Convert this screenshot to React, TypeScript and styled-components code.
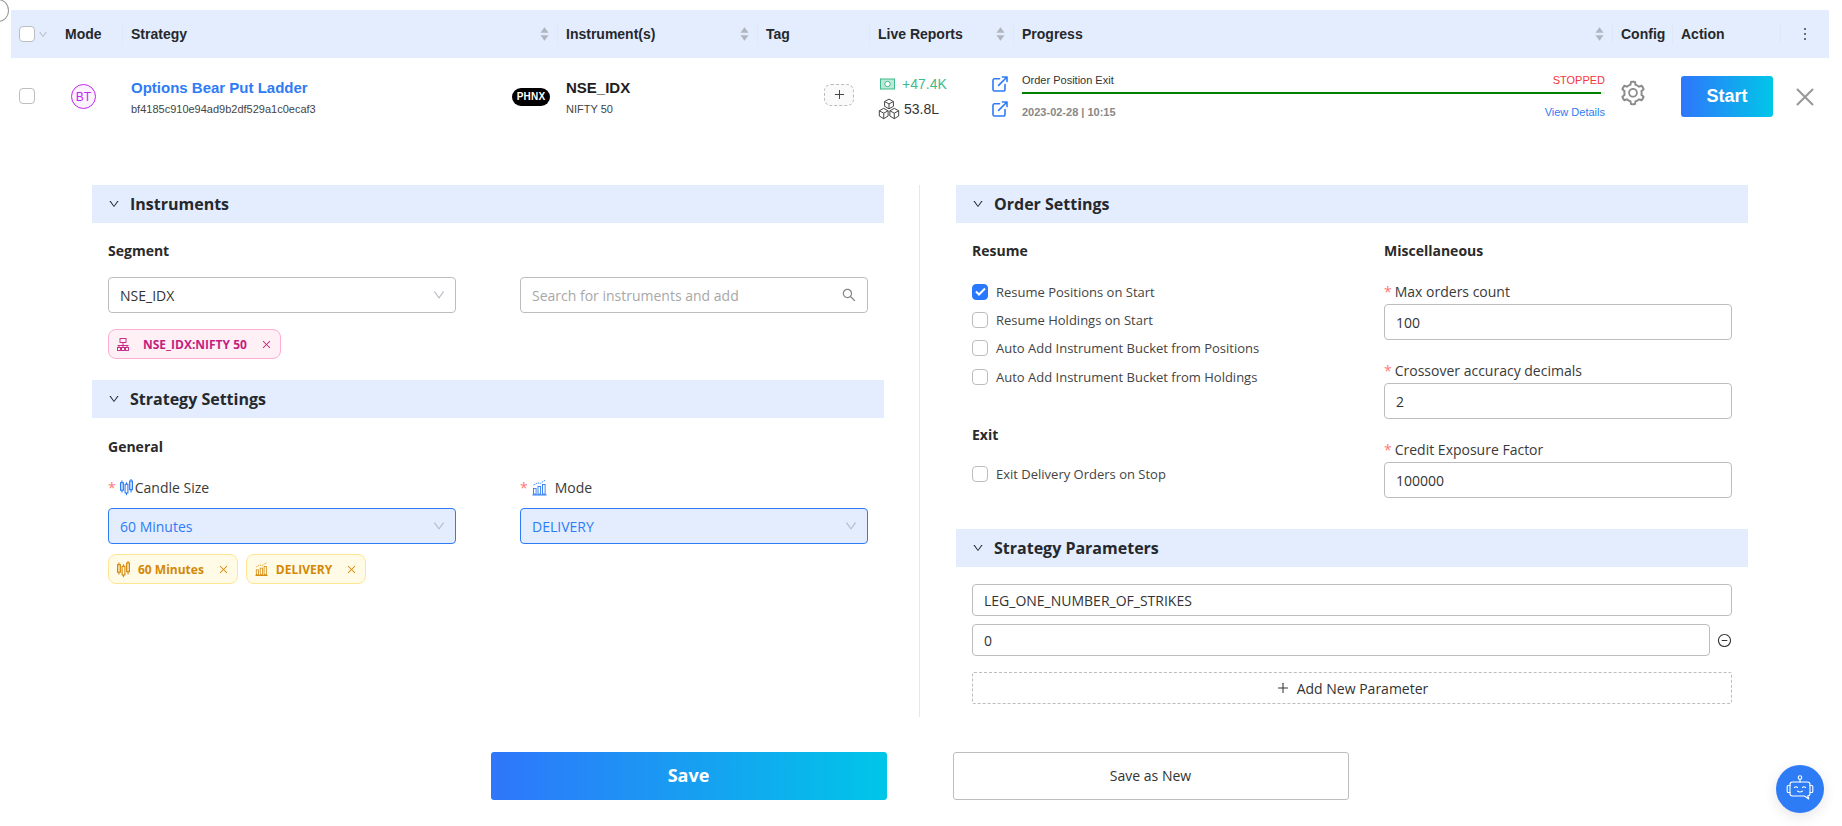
import React from "react";
import styled, { createGlobalStyle } from "styled-components";
import {
  AiOutlineClose,
  AiOutlineDown,
  AiOutlineMinusCircle,
  AiOutlinePlus,
  AiOutlineSearch,
  AiOutlineSetting,
} from "react-icons/ai";

const Global = createGlobalStyle`
  html, body { margin: 0; padding: 0; background: #fff; overflow: hidden; }
  * { box-sizing: border-box; }
  body { font-family: "Open Sans", "Noto Sans", sans-serif; color: #333; }
`;

const COLS = "46px 66px 435px 200px 112px 144px 599px 60px 108px 48px";
const BAR = "#e3edfe";

const Page = styled.div`
  position: relative;
  width: 1842px;
  height: 826px;
  padding: 10px 13px 0 11px;
  overflow: hidden;
`;
const CornerRing = styled.div`
  position: absolute;
  left: -13px;
  top: -1px;
  width: 22px;
  height: 23px;
  border-radius: 50%;
  border: 1px solid #999;
  background: #fff;
`;
const TableHead = styled.div`
  display: grid;
  grid-template-columns: ${COLS};
  height: 48px;
  background: ${BAR};
  font: 700 14px "Liberation Sans", Arial, sans-serif;
  color: #25282c;
`;
const HeadCell = styled.div<{ $sep?: boolean }>`
  position: relative;
  display: flex;
  align-items: center;
  justify-content: space-between;
  padding: 0 9px 0 8px;
  &::after {
    content: "";
    display: ${(p) => (p.$sep ? "block" : "none")};
    position: absolute;
    right: 0;
    top: 13px;
    height: 22px;
    width: 1px;
    background: #dfe8f8;
  }
`;
const SelectCell = styled(HeadCell)`
  justify-content: flex-start;
  gap: 3px;
  color: #a9adb5;
`;
const MoreCell = styled(HeadCell)`
  justify-content: center;
  padding-right: 9px;
`;
const Box = styled.span<{ $on?: boolean }>`
  flex: none;
  display: inline-flex;
  align-items: center;
  justify-content: center;
  width: 16px;
  height: 16px;
  border-radius: 4px;
  border: 1px solid ${(p) => (p.$on ? "#2979ff" : "#bdbdbd")};
  background: ${(p) => (p.$on ? "#2979ff" : "#fff")};
`;
const TableRow = styled.div`
  display: grid;
  grid-template-columns: ${COLS};
  height: 77px;
  align-items: center;
  font-family: "Liberation Sans", Arial, sans-serif;
`;
const Cell = styled.div`
  padding: 0 8px;
  min-width: 0;
`;
const CheckCell = styled(Cell)`
  padding-top: 2px;
`;
const ModeBadge = styled.span`
  display: flex;
  align-items: center;
  justify-content: center;
  width: 25px;
  height: 25px;
  margin-left: 6px;
  border-radius: 50%;
  border: 1px solid #c026f0;
  background: #fdf3ff;
  color: #c026f0;
  font-size: 12px;
`;
const StrategyCell = styled(Cell)`
  display: grid;
  grid-template-columns: 1fr auto;
  align-items: center;
  padding-right: 8px;
`;
const StrategyName = styled.div`
  font: 700 15px/18px "Liberation Sans", Arial, sans-serif;
  color: #2e7bf6;
  margin: 1px 0 5px;
`;
const SubText = styled.div`
  font-size: 11px;
  line-height: 14px;
  color: #444;
`;
const Pill = styled.span`
  display: flex;
  align-items: center;
  justify-content: center;
  width: 38px;
  height: 18px;
  border-radius: 9px;
  background: #000;
  color: #fff;
  font: 700 10px "Liberation Sans", Arial, sans-serif;
  letter-spacing: 0.2px;
`;
const InstName = styled.div`
  font: 700 15px/18px "Liberation Sans", Arial, sans-serif;
  color: #1e1e1e;
  margin: 1px 0 5px;
`;
const TagCell = styled(Cell)`
  display: flex;
  justify-content: flex-end;
  padding-right: 16px;
`;
const TagAdd = styled.span`
  display: flex;
  align-items: center;
  justify-content: center;
  width: 30px;
  height: 22px;
  border: 1px dashed #bbb;
  border-radius: 7px;
  background: #fafafa;
  color: #444;
  font-size: 13px;
  margin-top: -4px;
`;
const LiveGrid = styled.div`
  display: grid;
  grid-template-columns: 1fr auto;
  row-gap: 5px;
  align-items: center;
  margin-right: -2px;
  margin-top: -1px;
`;
const LiveValue = styled.div<{ $green?: boolean }>`
  display: flex;
  align-items: center;
  gap: ${(p) => (p.$green ? "7px" : "4px")};
  height: 20px;
  font-size: 14px;
  color: ${(p) => (p.$green ? "#3dba8c" : "#333")};
  padding-left: ${(p) => (p.$green ? "2px" : "0")};
`;
const ProgressCell = styled(Cell)`
  margin-top: -1px;
`;
const ProgressTop = styled.div`
  display: flex;
  justify-content: space-between;
  font-size: 11px;
  line-height: 14px;
  color: #333;
`;
const Stopped = styled.span`
  color: #f5363c;
`;
const Track = styled.div`
  height: 2px;
  margin: 5px 0 11px;
  background: #eee;
  padding-right: 4px;
`;
const Fill = styled.div`
  height: 2px;
  background: #008000;
`;
const ProgressBottom = styled.div`
  display: flex;
  justify-content: space-between;
  font-size: 11px;
  line-height: 14px;
`;
const DateText = styled.span`
  font-weight: 700;
  color: #888;
`;
const ViewLink = styled.span`
  color: #2e7bf6;
`;
const Start = styled.button`
  width: 92px;
  height: 41px;
  border: 0;
  border-radius: 3px;
  background: linear-gradient(90deg, #2f76fb, #00c6e8);
  color: #fff;
  font: 700 18px "Liberation Sans", Arial, sans-serif;
`;
const ActionCell = styled.div`
  padding-left: 8px;
`;
const CloseCell = styled.div`
  display: flex;
  padding-left: 11px;
  color: #999;
`;
const ConfigCell = styled.div`
  display: flex;
  padding-left: 6px;
  color: #8c8c8c;
  margin-top: -8px;
`;
const Form = styled.div`
  display: grid;
  grid-template-columns: 792px 72px 792px;
  margin: 50px 0 0 81px;
  height: 532px;
`;
const Divider = styled.div`
  width: 1px;
  background: #e8e8e8;
  margin-left: 35px;
`;
const Column = styled.div`
  display: flex;
  flex-direction: column;
`;
const SectionBar = styled.div`
  display: flex;
  align-items: center;
  gap: 10px;
  height: 38px;
  flex: none;
  padding-left: 16px;
  background: ${BAR};
  color: #25282c;
  font-size: 16px;
  font-weight: 700;
`;
const SectionBody = styled.div<{ $after?: number; $top?: number }>`
  padding: ${(p) => p.$top ?? 18}px 16px 0;
  margin-bottom: ${(p) => p.$after ?? 0}px;
`;
const SubTitle = styled.div<{ $after?: number; $before?: number }>`
  font-size: 14px;
  line-height: 20px;
  font-weight: 700;
  color: #2a2a2a;
  margin-top: ${(p) => p.$before ?? 0}px;
  margin-bottom: ${(p) => p.$after ?? 0}px;
`;
const TwoUp = styled.div`
  display: grid;
  grid-template-columns: 348px 348px;
  column-gap: 64px;
`;
const SelectBox = styled.div<{ $active?: boolean; $muted?: boolean }>`
  display: flex;
  align-items: center;
  justify-content: space-between;
  height: 36px;
  padding: 0 11px;
  border-radius: 4px;
  border: 1px solid ${(p) => (p.$active ? "#2e7bf6" : "#bdbdbd")};
  background: ${(p) => (p.$active ? BAR : "#fff")};
  color: ${(p) => (p.$active ? "#2e7bf6" : p.$muted ? "#a8a8a8" : "#333")};
  font-size: 14px;
`;
const Caret = styled.span`
  display: flex;
  color: #b5bac3;
  margin-right: -2px;
`;
const SearchGlyph = styled(Caret)`
  color: #888;
  margin-right: -1px;
`;
const TagRow = styled.div<{ $top: number }>`
  display: flex;
  gap: 8px;
  margin-top: ${(p) => p.$top}px;
`;
const Chip = styled.span<{ $pink?: boolean }>`
  display: inline-flex;
  align-items: center;
  height: 30px;
  padding: 0 8px;
  border-radius: 8px;
  border: 1px solid ${(p) => (p.$pink ? "#ffadd2" : "#ffe58f")};
  background: ${(p) => (p.$pink ? "#fff0f6" : "#fffbe6")};
  color: ${(p) => (p.$pink ? "#c41d7f" : "#d48806")};
  font-size: 12px;
  font-weight: 700;
  gap: ${(p) => (p.$pink ? "14px" : "8px")};
`;
const ChipClose = styled.span<{ $tight?: boolean }>`
  display: flex;
  margin-left: ${(p) => (p.$tight ? 0 : 6)}px;
`;
const FieldLabel = styled.div<{ $raised?: boolean }>`
  display: flex;
  align-items: center;
  height: 20px;
  padding-bottom: ${(p) => (p.$raised ? 2 : 0)}px;
  font-size: 14px;
  color: #3a3a3a;
`;
const Star = styled.span`
  color: #ff7875;
  margin-right: 3px;
  font-size: 14px;
`;
const LabelIcon = styled.span<{ $gap?: number }>`
  display: flex;
  margin-left: 1px;
  margin-right: ${(p) => p.$gap ?? 2}px;
`;
const OrderGrid = styled.div`
  display: grid;
  grid-template-columns: 412px 348px;
  margin-bottom: 31px;
`;
const Check = styled.label`
  display: flex;
  align-items: center;
  gap: 8px;
  height: 28.4px;
  font-size: 13px;
  color: #444;
`;
const CheckList = styled.div<{ $top: number }>`
  margin-top: ${(p) => p.$top}px;
`;
const Fields = styled.div`
  display: flex;
  flex-direction: column;
  gap: 21px;
  margin-top: 21px;
`;
const Field = styled.div<{ $gap?: number }>`
  display: flex;
  flex-direction: column;
  gap: ${(p) => p.$gap ?? 2}px;
`;
const TextBox = styled.div`
  display: flex;
  align-items: center;
  height: 36px;
  padding: 0 11px;
  border-radius: 4px;
  border: 1px solid #bdbdbd;
  font-size: 14px;
  color: #333;
  background: #fff;
`;
const ParamBox = styled(TextBox)`
  height: 32px;
  flex: 1;
`;
const ParamList = styled.div`
  display: flex;
  flex-direction: column;
  gap: 8px;
  padding: 17px 16px 0;
`;
const ParamRow = styled.div`
  display: flex;
  align-items: center;
  gap: 7px;
  color: #333;
`;
const AddParam = styled.div`
  display: flex;
  align-items: center;
  justify-content: center;
  gap: 7px;
  height: 32px;
  margin-top: 8px;
  border: 1px dashed #bdbdbd;
  border-radius: 2px;
  font-size: 14px;
  color: #333;
`;
const Actions = styled.div`
  display: flex;
  justify-content: center;
  gap: 66px;
  padding-right: 1px;
  margin-top: 35px;
`;
const SaveButton = styled.button`
  width: 396px;
  height: 48px;
  padding: 0 0 2px;
  border: 0;
  border-radius: 3px;
  background: linear-gradient(90deg, #2f76fb, #00c6e8);
  color: #fff;
  font: 700 18px "Open Sans", sans-serif;
`;
const SaveNewButton = styled.button`
  width: 396px;
  height: 48px;
  padding: 0 0 2px;
  border: 1px solid #bdbdbd;
  border-radius: 3px;
  background: #fff;
  color: #333;
  font: 400 14px "Open Sans", sans-serif;
`;
const BotButton = styled.div`
  position: absolute;
  left: 1776px;
  top: 765px;
  width: 48px;
  height: 48px;
  border-radius: 50%;
  background: #2e7bf6;
  display: flex;
  align-items: center;
  justify-content: center;
  box-shadow: 0 4px 14px rgba(0, 0, 0, 0.1);
`;

const Sort = () => (
  <svg width="9" height="16" viewBox="0 0 10 16" fill="#b0b5bf">
    <path d="M5 0.5 9.5 6.5H.5z" />
    <path d="M.5 9.5h9L5 15.5z" />
  </svg>
);
const Dots = () => (
  <svg width="4" height="14" viewBox="0 0 4 14" fill="#444">
    <circle cx="2" cy="2" r="1" />
    <circle cx="2" cy="7" r="1" />
    <circle cx="2" cy="12" r="1" />
  </svg>
);
const Tick = () => (
  <svg width="11" height="9" viewBox="0 0 11 9" fill="none" stroke="#fff" strokeWidth="2">
    <path d="M1 4.5 4 7.5 10 1.5" />
  </svg>
);
const Money = () => (
  <svg width="15" height="12" viewBox="0 0 15 12" fill="none" stroke="#3dba8c">
    <rect x=".5" y="1" width="14" height="10" fill="#bfe9d7" />
    <ellipse cx="7.5" cy="6" rx="2.8" ry="2.6" fill="#fff" />
  </svg>
);
const Cubes = () => (
  <svg width="22" height="22" viewBox="0 0 20 20" fill="none" stroke="#444" strokeWidth="0.9" strokeLinejoin="round">
    <path d="M10 1 14 3.2V7.6L10 9.8 6 7.6V3.2z M6 3.2 10 5.4 14 3.2 M10 5.4V9.8" />
    <path d="M5.2 9.4 9.2 11.6V16.4L5.2 18.8 1.2 16.4V11.6z M1.2 11.6 5.2 13.8 9.2 11.6 M5.2 13.8V18.8" />
    <path d="M14.8 9.4 18.8 11.6V16.4L14.8 18.8 10.8 16.4V11.6z M10.8 11.6 14.8 13.8 18.8 11.6 M14.8 13.8V18.8" />
  </svg>
);
const Ext = () => (
  <svg width="16" height="16" viewBox="0 0 16 16" fill="none" stroke="#2e7bf6" strokeWidth="1.6" strokeLinecap="round" strokeLinejoin="round">
    <path d="M7.5 2.8H2.4A1.4 1.4 0 0 0 1 4.2v9.4A1.4 1.4 0 0 0 2.4 15h9.2a1.4 1.4 0 0 0 1.4-1.4V8.6" />
    <path d="M6.6 9.4 15 1M10.4 1H15V5.6" />
  </svg>
);
const Candles = ({ c, w = 13, h = 18 }: { c: string; w?: number; h?: number }) => (
  <svg width={w} height={h} viewBox="0 0 12 16" fill="none" stroke={c} strokeWidth="1">
    <rect x=".5" y="4" width="2.6" height="7" fill={c} fillOpacity=".25" />
    <path d="M1.8 2V4M1.8 11V13" />
    <rect x="4.7" y="5.5" width="2.6" height="8" />
    <path d="M6 3.5V5.5M6 13.5V15.5" />
    <rect x="8.9" y="2.5" width="2.6" height="8" fill={c} fillOpacity=".25" />
    <path d="M10.2 .5V2.5M10.2 10.5V13" />
  </svg>
);
const Bars = ({ c, w = 15, h = 17 }: { c: string; w?: number; h?: number }) => (
  <svg width={w} height={h} viewBox="0 0 15 16" fill="none" stroke={c} strokeWidth="0.9">
    <rect x="1.5" y="9" width="2.6" height="5.5" />
    <rect x="6" y="7" width="2.6" height="7.5" />
    <rect x="10.5" y="5" width="2.6" height="9.5" />
    <path d="M.5 15.4H14.5" strokeWidth="1.2" />
    <path d="M1.5 5.5 5.5 3.5 8.5 3.8 13 .8" strokeDasharray="1.5 .8" />
  </svg>
);
const SiteMap = () => (
  <svg width="12" height="13" viewBox="0 0 12 13" fill="none" stroke="#c41d7f" strokeWidth="0.9">
    <rect x="3" y=".5" width="6" height="4" />
    <path d="M.5 7.5H11.5M6 4.5V7.5M2 7.5V9.5M6 7.5V9.5M10 7.5V9.5" />
    <rect x=".5" y="9.5" width="3" height="3" />
    <rect x="4.5" y="9.5" width="3" height="3" />
    <rect x="8.5" y="9.5" width="3" height="3" />
  </svg>
);
const Bot = () => (
  <svg width="30" height="30" viewBox="0 0 30 30" fill="none" stroke="#fff" strokeWidth="1.1" strokeLinecap="round" strokeLinejoin="round">
    <circle cx="15" cy="3.6" r="1.8" />
    <path d="M15 5.4V8" />
    <path d="M7.5 8H22.5A2.5 2.5 0 0 1 25 10.5V19.5A2.5 2.5 0 0 1 22.5 22H22.8L23.8 25 19.5 22H7.5A2.5 2.5 0 0 1 5 19.5V10.5A2.5 2.5 0 0 1 7.5 8z" />
    <path d="M5 11.5H3.2A1 1 0 0 0 2.2 12.5V17.5A1 1 0 0 0 3.2 18.5H5M25 11.5H26.8A1 1 0 0 1 27.8 12.5V17.5A1 1 0 0 1 26.8 18.5H25" />
    <path d="M9.5 13.5Q11 12 12.5 13.5M17.5 13.5Q19 12 20.5 13.5M12.5 17Q15 19 17.5 17" />
  </svg>
);

const Chevron = () => <AiOutlineDown size={12} />;

const checksTop = ["Resume Positions on Start", "Resume Holdings on Start", "Auto Add Instrument Bucket from Positions", "Auto Add Instrument Bucket from Holdings"];

export default function App() {
  return (
    <Page>
      <Global />
      <CornerRing />
      <TableHead>
        <SelectCell>
          <Box />
          <AiOutlineDown size={15} />
        </SelectCell>
        <HeadCell $sep>Mode</HeadCell>
        <HeadCell $sep>Strategy<Sort /></HeadCell>
        <HeadCell $sep>Instrument(s)<Sort /></HeadCell>
        <HeadCell $sep>Tag</HeadCell>
        <HeadCell $sep>Live Reports<Sort /></HeadCell>
        <HeadCell $sep>Progress<Sort /></HeadCell>
        <HeadCell $sep>Config</HeadCell>
        <HeadCell $sep>Action</HeadCell>
        <MoreCell><Dots /></MoreCell>
      </TableHead>
      <TableRow>
        <CheckCell><Box /></CheckCell>
        <Cell><ModeBadge>BT</ModeBadge></Cell>
        <StrategyCell>
          <div>
            <StrategyName>Options Bear Put Ladder</StrategyName>
            <SubText>bf4185c910e94ad9b2df529a1c0ecaf3</SubText>
          </div>
          <Pill>PHNX</Pill>
        </StrategyCell>
        <Cell>
          <InstName>NSE_IDX</InstName>
          <SubText>NIFTY 50</SubText>
        </Cell>
        <TagCell><TagAdd><AiOutlinePlus /></TagAdd></TagCell>
        <Cell>
          <LiveGrid>
            <LiveValue $green><Money />+47.4K</LiveValue>
            <Ext />
            <LiveValue><Cubes />53.8L</LiveValue>
            <Ext />
          </LiveGrid>
        </Cell>
        <ProgressCell>
          <ProgressTop>Order Position Exit<Stopped>STOPPED</Stopped></ProgressTop>
          <Track><Fill /></Track>
          <ProgressBottom>
            <DateText>2023-02-28 | 10:15</DateText>
            <ViewLink>View Details</ViewLink>
          </ProgressBottom>
        </ProgressCell>
        <ConfigCell><AiOutlineSetting size={28} /></ConfigCell>
        <ActionCell><Start>Start</Start></ActionCell>
        <CloseCell><AiOutlineClose size={26} /></CloseCell>
      </TableRow>

      <Form>
        <Column>
          <SectionBar><Chevron />Instruments</SectionBar>
          <SectionBody $after={21}>
            <SubTitle $after={16}>Segment</SubTitle>
            <TwoUp>
              <SelectBox>NSE_IDX<Caret><AiOutlineDown size={14} /></Caret></SelectBox>
              <SelectBox $muted>Search for instruments and add<SearchGlyph><AiOutlineSearch size={16} /></SearchGlyph></SelectBox>
            </TwoUp>
            <TagRow $top={16}>
              <Chip $pink>
                <SiteMap />NSE_IDX:NIFTY 50
                <ChipClose $tight><AiOutlineClose size={11} /></ChipClose>
              </Chip>
            </TagRow>
          </SectionBody>
          <SectionBar><Chevron />Strategy Settings</SectionBar>
          <SectionBody $top={19}>
            <SubTitle $after={20}>General</SubTitle>
            <TwoUp>
              <Field $gap={11}>
                <FieldLabel>
                  <Star>*</Star>
                  <LabelIcon><Candles c="#2e7bf6" /></LabelIcon>Candle Size
                </FieldLabel>
                <SelectBox $active>60 Minutes<Caret><AiOutlineDown size={14} /></Caret></SelectBox>
              </Field>
              <Field $gap={11}>
                <FieldLabel>
                  <Star>*</Star>
                  <LabelIcon $gap={8}><Bars c="#2e7bf6" /></LabelIcon>Mode
                </FieldLabel>
                <SelectBox $active>DELIVERY<Caret><AiOutlineDown size={14} /></Caret></SelectBox>
              </Field>
            </TwoUp>
            <TagRow $top={10}>
              <Chip>
                <Candles c="#d48806" />60 Minutes
                <ChipClose><AiOutlineClose size={11} /></ChipClose>
              </Chip>
              <Chip>
                <Bars c="#d48806" w={13} h={14} />DELIVERY
                <ChipClose><AiOutlineClose size={11} /></ChipClose>
              </Chip>
            </TagRow>
          </SectionBody>
        </Column>

        <Divider />

        <Column>
          <SectionBar><Chevron />Order Settings</SectionBar>
          <SectionBody>
            <OrderGrid>
              <div>
                <SubTitle>Resume</SubTitle>
                <CheckList $top={16.5}>
                  {checksTop.map((t, i) => (
                    <Check key={t}>
                      <Box $on={i === 0}>{i === 0 && <Tick />}</Box>
                      {t}
                    </Check>
                  ))}
                </CheckList>
                <SubTitle $before={33.6}>Exit</SubTitle>
                <CheckList $top={14.8}>
                  <Check><Box />Exit Delivery Orders on Stop</Check>
                </CheckList>
              </div>
              <div>
                <SubTitle>Miscellaneous</SubTitle>
                <Fields>
                  <Field>
                    <FieldLabel $raised><Star>*</Star>Max orders count</FieldLabel>
                    <TextBox>100</TextBox>
                  </Field>
                  <Field>
                    <FieldLabel $raised><Star>*</Star>Crossover accuracy decimals</FieldLabel>
                    <TextBox>2</TextBox>
                  </Field>
                  <Field>
                    <FieldLabel $raised><Star>*</Star>Credit Exposure Factor</FieldLabel>
                    <TextBox>100000</TextBox>
                  </Field>
                </Fields>
              </div>
            </OrderGrid>
          </SectionBody>
          <SectionBar><Chevron />Strategy Parameters</SectionBar>
          <ParamList>
            <ParamRow><ParamBox>LEG_ONE_NUMBER_OF_STRIKES</ParamBox></ParamRow>
            <ParamRow><ParamBox>0</ParamBox><AiOutlineMinusCircle size={15} /></ParamRow>
            <AddParam><AiOutlinePlus size={14} />Add New Parameter</AddParam>
          </ParamList>
        </Column>
      </Form>

      <Actions>
        <SaveButton>Save</SaveButton>
        <SaveNewButton>Save as New</SaveNewButton>
      </Actions>
      <BotButton><Bot /></BotButton>
    </Page>
  );
}
